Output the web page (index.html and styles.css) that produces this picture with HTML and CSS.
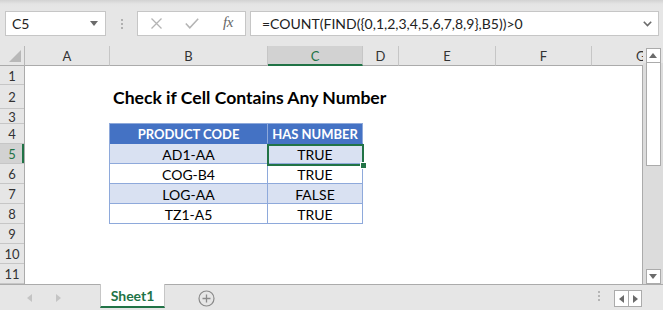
FILE: index.html
```html
<!DOCTYPE html>
<html>
<head>
<meta charset="utf-8">
<link rel="stylesheet" href="styles.css">
</head>
<body>
<div class="app">
  <div class="fbar">
    <div class="namebox">
      <span class="nb-text">C5</span>
      <svg class="nb-arrow" width="8" height="5" viewBox="0 0 8 5"><path d="M0 0H8L4 5Z" fill="#6b6b6b"/></svg>
    </div>
    <div class="sep"><i></i><i></i><i></i></div>
    <div class="fbtns">
      <svg class="ic-x" width="11" height="11" viewBox="0 0 11 11"><path d="M0.5 0.5L10.5 10.5M10.5 0.5L0.5 10.5" stroke="#b4b4b4" stroke-width="1.3" fill="none"/></svg>
      <svg class="ic-ok" width="14" height="11" viewBox="0 0 14 11"><path d="M0.8 5.5L4.8 9.8L13.2 0.8" stroke="#b4b4b4" stroke-width="1.5" fill="none"/></svg>
      <span class="ic-fx">fx</span>
    </div>
    <div class="finput">
      <span class="ftext">=COUNT(FIND({0,1,2,3,4,5,6,7,8,9},B5))&gt;0</span>
      <svg class="fchev" width="9" height="6" viewBox="0 0 9 6"><path d="M0.8 0.8L4.5 4.6L8.2 0.8" stroke="#6b6b6b" stroke-width="1.6" fill="none"/></svg>
    </div>
  </div>

  <div class="sheet">
    <div class="main">
      <div class="colheads">
        <div class="corner"><svg width="12" height="12" viewBox="0 0 12 12"><path d="M12 0V12H0Z" fill="#b8b8b8"/></svg></div>
        <div class="ch">A</div>
        <div class="ch">B</div>
        <div class="ch sel">C</div>
        <div class="ch">D</div>
        <div class="ch">E</div>
        <div class="ch">F</div>
        <div class="ch last"><span class="gl">G</span></div>
      </div>
      <div class="body">
        <div class="rowheads">
          <div class="rh">1</div>
          <div class="rh">2</div>
          <div class="rh">3</div>
          <div class="rh">4</div>
          <div class="rh sel">5</div>
          <div class="rh">6</div>
          <div class="rh">7</div>
          <div class="rh">8</div>
          <div class="rh">9</div>
          <div class="rh">10</div>
          <div class="rh">11</div>
        </div>
        <div class="cells">
          <div class="title">Check if Cell Contains Any Number</div>
          <div class="tbl">
            <div class="th">PRODUCT CODE</div>
            <div class="th">HAS NUMBER</div>
            <div class="td band">AD1-AA</div>
            <div class="td band">TRUE</div>
            <div class="td">COG-B4</div>
            <div class="td">TRUE</div>
            <div class="td band">LOG-AA</div>
            <div class="td band">FALSE</div>
            <div class="td">TZ1-A5</div>
            <div class="td">TRUE</div>
            <div class="selbox"><span class="handle"></span></div>
          </div>
        </div>
      </div>
    </div>
    <div class="vscroll">
      <div class="vhead"><div class="sbtn"><svg width="8" height="5" viewBox="0 0 8 5"><path d="M0 5H8L4 0Z" fill="#6b6b6b"/></svg></div></div>
      <div class="thumb"></div>
      <div class="track"></div>
      <div class="sbtn"><svg width="8" height="5" viewBox="0 0 8 5"><path d="M0 0H8L4 5Z" fill="#6b6b6b"/></svg></div>
    </div>
  </div>

  <div class="tabs">
    <div class="navs">
      <svg width="5" height="8" viewBox="0 0 5 8"><path d="M5 0V8L0 4Z" fill="#c4c4c4"/></svg>
      <svg width="5" height="8" viewBox="0 0 5 8"><path d="M0 0V8L5 4Z" fill="#c4c4c4"/></svg>
    </div>
    <div class="tab">Sheet1</div>
    <svg class="plus" width="17" height="17" viewBox="0 0 17 17"><circle cx="8.5" cy="8.5" r="7.5" stroke="#8a8a8a" stroke-width="1.2" fill="none"/><path d="M8.5 4.5V12.5M4.5 8.5H12.5" stroke="#8a8a8a" stroke-width="1.3"/></svg>
    <div class="spacer"></div>
    <div class="dots"><i></i><i></i><i></i></div>
    <div class="hnav">
      <div class="hbtn"><svg width="5" height="8" viewBox="0 0 5 8"><path d="M5 0V8L0 4Z" fill="#6b6b6b"/></svg></div>
      <div class="hbtn"><svg width="5" height="8" viewBox="0 0 5 8"><path d="M0 0V8L5 4Z" fill="#6b6b6b"/></svg></div>
    </div>
  </div>
</div>
</body>
</html>
```

FILE: styles.css
```css
* { box-sizing: border-box; }
html, body { margin: 0; padding: 0; }
body {
  width: 663px;
  height: 310px;
  overflow: hidden;
  background: #e6e6e6;
  font-family: Lato, "Liberation Sans", sans-serif;
}
.app { width: 663px; height: 310px; display: flex; flex-direction: column; }

/* formula bar */
.fbar {
  height: 46px;
  display: flex;
  align-items: flex-start;
  padding: 11px 0 0 5px;
  background: linear-gradient(#d2d2d2 0px, #e4e4e4 4px, #e6e6e6 8px);
}
.namebox {
  width: 101px; height: 25px;
  background: #fff;
  border: 1px solid #c6c6c6;
  display: flex; align-items: center;
  padding: 0 0 0 6px;
  font-size: 14px; color: #222;
}
.nb-text { flex: 1; }
.nb-arrow { margin-right: 7px; }
.sep {
  width: 31px; height: 25px;
  display: flex; flex-direction: column; align-items: center; justify-content: center; gap: 2px;
}
.sep i { width: 2px; height: 2px; background: #b0b0b0; display: block; }
.fbtns {
  width: 109px; height: 25px;
  background: #fff;
  border: 1px solid #c6c6c6;
  display: flex; align-items: center;
  padding-left: 13px;
}
.ic-x { margin-right: 23px; }
.ic-ok { margin-right: 24px; }
.ic-fx { font-family: "Liberation Serif", serif; font-style: italic; font-size: 15px; color: #666; letter-spacing: -0.5px; margin-top: -2px; }
.finput {
  width: 409px; height: 25px;
  margin-left: 4px;
  background: #fff;
  border: 1px solid #c6c6c6;
  display: flex; align-items: center;
  padding-left: 11px; padding-right: 6px;
  font-size: 14px; color: #222;
}
.ftext { flex: 1; white-space: nowrap; }

/* sheet */
.sheet { display: flex; height: 238px; }
.main { width: 643px; display: flex; flex-direction: column; }
.colheads {
  height: 20px;
  display: grid;
  grid-template-columns: 25px 85px 158px 95px 36px 97px 96px 51px;
  background: #e6e6e6;
}
.corner {
  border-right: 1px solid #b8b8b8;
  border-bottom: 1px solid #ababab;
  display: flex; align-items: flex-end; justify-content: flex-end;
  padding: 0 3px 3px 0;
}
.ch {
  border-right: 1px solid #c6c6c6;
  border-bottom: 1px solid #ababab;
  display: flex; align-items: center; justify-content: center;
  font-size: 13px; color: #333;
  padding-top: 1px;
}
.ch.last { border-right: none; justify-content: flex-end; padding-right: 0; }
.gl { display: inline-block; width: 7px; overflow: hidden; white-space: nowrap; }
.ch.sel { background: #d2d2d2; color: #217346; border-bottom: 2px solid #217346; }

.body { display: flex; height: 218px; }
.rowheads {
  width: 25px;
  display: grid;
  grid-template-rows: 19px 24px 15px repeat(8, 20px);
  background: #e6e6e6;
  border-right: 1px solid #ababab;
}
.rh {
  border-bottom: 1px solid #c6c6c6;
  display: flex; align-items: center; justify-content: center;
  font-size: 13px; color: #333;
  padding-top: 1px;
}
.rh.sel { background: #d2d2d2; color: #217346; box-shadow: inset -2px 0 0 #217346; }

.cells {
  width: 618px;
  background: #fff;
  border-right: 1px solid #ababab;
  display: grid;
  grid-template-columns: 85px 158px 95px 36px 97px 96px 50px;
  grid-template-rows: 19px 24px 15px repeat(8, 20px);
}
.title {
  grid-column: 2; grid-row: 2;
  white-space: nowrap;
  font-weight: bold; font-size: 17.6px; color: #000;
  align-self: end;
  padding-left: 3px;
  line-height: 20px;
  padding-bottom: 1px;
}
.tbl {
  grid-column: 2 / 4; grid-row: 4 / 9;
  position: relative;
  display: grid;
  grid-template-columns: 158px 95px;
  grid-template-rows: repeat(5, 20px);
  border-left: 1px solid #8ea9db;
  border-top: 1px solid #8ea9db;
  margin-top: -1px;
  margin-left: -1px;
  height: 101px;
  width: 254px;
}
.th, .td {
  display: flex; align-items: center; justify-content: center;
  font-size: 14px;
  border-right: 1px solid #8ea9db;
  border-bottom: 1px solid #8ea9db;
  padding-top: 1px;
}
.th { background: #4472c4; color: #fff; font-weight: bold; font-size: 13px; border-bottom-color: #4472c4; }
.td { color: #000; background: #fff; }
.td.band { background: #d9e1f2; }
.selbox {
  position: absolute;
  left: 157px; top: 20px;
  width: 97px; height: 22px;
  border: 2px solid #217346;
}
.handle {
  position: absolute;
  right: -5px; bottom: -5px;
  width: 7px; height: 7px;
  background: #217346;
  border: 1px solid #fff;
}

/* vertical scroll */
.vscroll { width: 20px; display: flex; flex-direction: column; align-items: center; background: #dcdcdc; }
.vhead { height: 17px; width: 20px; background: #e6e6e6; display: flex; justify-content: center; align-items: flex-end; }
.sbtn {
  width: 15px; height: 15px;
  background: #fff;
  border: 1px solid #ababab;
  display: flex; align-items: center; justify-content: center;
}
.thumb { width: 15px; height: 103px; background: #fff; border: 1px solid #ababab; border-top: none; }
.track { flex: 1; }

/* tabs */
.tabs {
  height: 26px;
  display: flex;
  align-items: flex-start;
  border-top: 1px solid #ababab;
  background: #e6e6e6;
}
.navs { width: 100px; height: 25px; display: flex; align-items: center; padding-left: 27px; gap: 24px; }
.tab {
  width: 65px; height: 24px;
  background: #fff;
  border-left: 1px solid #c6c6c6;
  border-right: 1px solid #c6c6c6;
  border-bottom: 2px solid #217346;
  display: flex; align-items: center; justify-content: center;
  font-weight: bold; font-size: 14px; color: #217346;
  margin-top: -1px;
  padding-top: 1px;
}
.plus { margin: 5px 0 0 33px; }
.spacer { flex: 1; }
.dots { display: flex; flex-direction: column; gap: 2px; margin: 6px 14px 0 0; }
.dots i { width: 2px; height: 2px; background: #b5b5b5; display: block; }
.hnav { display: flex; margin: 5px 21px 0 0; border: 1px solid #ababab; background: #fff; }
.hbtn { width: 13px; height: 15px; display: flex; align-items: center; justify-content: center; }
.hbtn + .hbtn { border-left: 1px solid #ababab; }
```
